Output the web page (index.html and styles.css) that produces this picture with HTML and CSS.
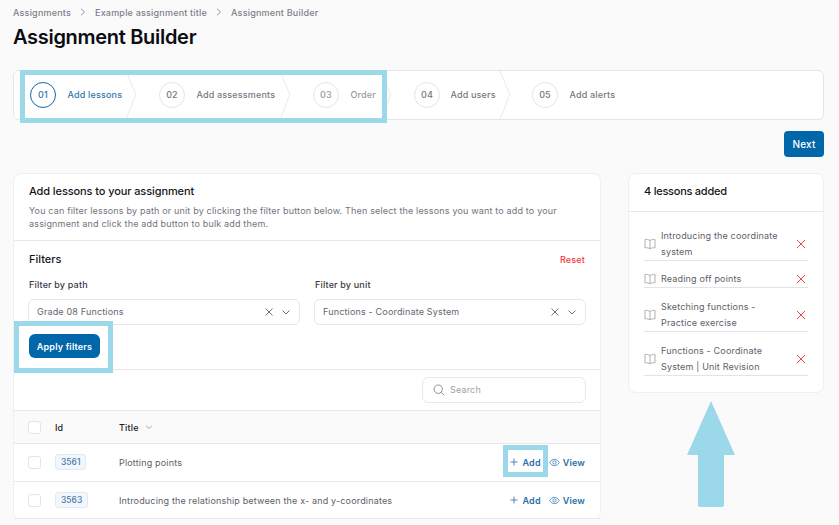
FILE: index.html
```html
<!DOCTYPE html>
<html lang="en">
<head>
<meta charset="utf-8">
<title>Assignment Builder</title>
<link rel="stylesheet" href="styles.css">
</head>
<body>
<div class="page">
  <nav class="crumbs">
    <span>Assignments</span>
    <svg class="crumb-sep" viewBox="0 0 8 8"><path d="M2 .8 5.6 4 2 7.2"/></svg>
    <span>Example assignment title</span>
    <svg class="crumb-sep" viewBox="0 0 8 8"><path d="M2 .8 5.6 4 2 7.2"/></svg>
    <span>Assignment Builder</span>
  </nav>
  <h1 class="title">Assignment Builder</h1>

  <div class="stepper">
    <div class="step step-active step-1"><span class="num">01</span><span class="step-label">Add lessons</span></div>
    <svg class="chev" viewBox="0 0 12 50"><path d="M1 0 11 24.500 1 50"/></svg>
    <div class="step step-2"><span class="num">02</span><span class="step-label">Add assessments</span></div>
    <svg class="chev" viewBox="0 0 12 50"><path d="M1 0 11 24.500 1 50"/></svg>
    <div class="step step-3 step-dim"><span class="num">03</span><span class="step-label">Order</span></div>
    <svg class="chev" viewBox="0 0 12 50"><path d="M1 0 11 24.500 1 50"/></svg>
    <div class="step step-4"><span class="num">04</span><span class="step-label">Add users</span></div>
    <svg class="chev" viewBox="0 0 12 50"><path d="M1 0 11 24.500 1 50"/></svg>
    <div class="step step-5"><span class="num">05</span><span class="step-label">Add alerts</span></div>
    <div class="hl hl-steps"></div>
  </div>

  <div class="next-row"><button class="btn btn-next">Next</button></div>

  <div class="columns">
    <section class="card main-card">
      <div class="intro">
        <h2 class="card-title title-intro">Add lessons to your assignment</h2>
        <p class="desc">You can filter lessons by path or unit by clicking the filter button below. Then select the lessons you want to add to your assignment and click the add button to bulk add them.</p>
      </div>
      <div class="filters">
        <div class="filters-head"><h3 class="card-title">Filters</h3><a class="reset">Reset</a></div>
        <div class="filter-grid">
          <div class="field">
            <label class="field-label">Filter by path</label>
            <div class="select"><span class="select-text">Grade 08 Functions</span>
              <svg class="ico-x" viewBox="0 0 10 10"><path d="M1.500 1.500 8.500 8.500M8.500 1.500 1.500 8.500"/></svg>
              <svg class="ico-down" viewBox="0 0 10 10"><path d="M1.500 3.500 5 7 8.500 3.500"/></svg>
            </div>
          </div>
          <div class="field">
            <label class="field-label">Filter by unit</label>
            <div class="select"><span class="select-text">Functions - Coordinate System</span>
              <svg class="ico-x" viewBox="0 0 10 10"><path d="M1.500 1.500 8.500 8.500M8.500 1.500 1.500 8.500"/></svg>
              <svg class="ico-down" viewBox="0 0 10 10"><path d="M1.500 3.500 5 7 8.500 3.500"/></svg>
            </div>
          </div>
        </div>
        <div class="apply-wrap">
          <button class="btn btn-apply">Apply filters</button>
          <div class="hl hl-apply"></div>
        </div>
      </div>
      <div class="search-row">
        <div class="search">
          <svg class="ico-search" viewBox="0 0 12 12"><circle cx="5.200" cy="5.200" r="4.200"/><path d="M8.300 8.300 11.200 11.200"/></svg>
          <span class="search-text">Search</span>
        </div>
      </div>
      <div class="row row-head">
        <span class="check"></span>
        <span class="col-id">Id</span>
        <span class="col-title">Title <svg class="ico-sort" viewBox="0 0 10 10"><path d="M1.500 3.500 5 7 8.500 3.500"/></svg></span>
      </div>
      <div class="row row-first">
        <span class="check"></span>
        <span class="col-id"><span class="badge">3561</span></span>
        <span class="col-title row-text">Plotting points</span>
        <div class="actions">
          <a class="action action-add"><svg class="ico-plus" viewBox="0 0 10 10"><path d="M5 .5V9.500M.5 5H9.500"/></svg>Add<span class="hl hl-add"></span></a>
          <a class="action"><svg class="ico-eye" viewBox="0 0 12 10"><path d="M.7 5C2 2.700 3.800 1.500 6 1.500S10 2.700 11.300 5C10 7.300 8.200 8.500 6 8.500S2 7.300.7 5Z"/><circle cx="6" cy="5" r="1.800"/></svg>View</a>
        </div>
      </div>
      <div class="row">
        <span class="check"></span>
        <span class="col-id"><span class="badge">3563</span></span>
        <span class="col-title row-text">Introducing the relationship between the x- and y-coordinates</span>
        <div class="actions">
          <a class="action action-add"><svg class="ico-plus" viewBox="0 0 10 10"><path d="M5 .5V9.500M.5 5H9.500"/></svg>Add</a>
          <a class="action"><svg class="ico-eye" viewBox="0 0 12 10"><path d="M.7 5C2 2.700 3.800 1.500 6 1.500S10 2.700 11.300 5C10 7.300 8.200 8.500 6 8.500S2 7.300.7 5Z"/><circle cx="6" cy="5" r="1.800"/></svg>View</a>
        </div>
      </div>
    </section>

    <aside class="side">
      <section class="card side-card">
        <div class="side-head"><h2 class="card-title title-side">4 lessons added</h2></div>
        <ul class="lessons">
          <li class="lesson">
            <svg class="ico-book" viewBox="0 0 12 12"><path d="M6 2.600C4.700 1.500 2.800 1.300 1 1.500V9.800C2.800 9.600 4.700 9.800 6 10.900 7.300 9.800 9.200 9.600 11 9.800V1.500C9.200 1.300 7.300 1.500 6 2.600ZM6 2.600V10.900"/></svg>
            <span class="lesson-text">Introducing the coordinate system</span>
            <svg class="ico-remove" viewBox="0 0 10 10"><path d="M1 1 9 9M9 1 1 9"/></svg>
          </li>
          <li class="lesson">
            <svg class="ico-book" viewBox="0 0 12 12"><path d="M6 2.600C4.700 1.500 2.800 1.300 1 1.500V9.800C2.800 9.600 4.700 9.800 6 10.900 7.300 9.800 9.200 9.600 11 9.800V1.500C9.200 1.300 7.300 1.500 6 2.600ZM6 2.600V10.900"/></svg>
            <span class="lesson-text">Reading off points</span>
            <svg class="ico-remove" viewBox="0 0 10 10"><path d="M1 1 9 9M9 1 1 9"/></svg>
          </li>
          <li class="lesson">
            <svg class="ico-book" viewBox="0 0 12 12"><path d="M6 2.600C4.700 1.500 2.800 1.300 1 1.500V9.800C2.800 9.600 4.700 9.800 6 10.900 7.300 9.800 9.200 9.600 11 9.800V1.500C9.200 1.300 7.300 1.500 6 2.600ZM6 2.600V10.900"/></svg>
            <span class="lesson-text">Sketching functions - Practice exercise</span>
            <svg class="ico-remove" viewBox="0 0 10 10"><path d="M1 1 9 9M9 1 1 9"/></svg>
          </li>
          <li class="lesson">
            <svg class="ico-book" viewBox="0 0 12 12"><path d="M6 2.600C4.700 1.500 2.800 1.300 1 1.500V9.800C2.800 9.600 4.700 9.800 6 10.900 7.300 9.800 9.200 9.600 11 9.800V1.500C9.200 1.300 7.300 1.500 6 2.600ZM6 2.600V10.900"/></svg>
            <span class="lesson-text">Functions - Coordinate System | Unit Revision</span>
            <svg class="ico-remove" viewBox="0 0 10 10"><path d="M1 1 9 9M9 1 1 9"/></svg>
          </li>
        </ul>
      </section>
      <svg class="arrow" viewBox="0 0 48 106"><path d="M24 0 48 54H37V104Q37 106 35 106H13Q11 106 11 104V54H0Z"/></svg>
    </aside>
  </div>
</div>
</body>
</html>
```
FILE: styles.css
```css
* { box-sizing: border-box; }
html, body { margin: 0; height: 525px; overflow: hidden; }
body { background: #fafafa; font-family: Inter, "Liberation Sans", sans-serif; color: #111827; letter-spacing: .17px; }
svg { display: block; flex: none; fill: none; }
.page { padding: 6px 15px 0 13px; }

.crumbs { display: flex; align-items: center; height: 12px; font-size: 9px; font-weight: 500; color: #80808a; gap: 7px; letter-spacing: .2px; }
.crumb-sep { width: 8px; height: 8px; margin: 0 1px; stroke: #8c8c94; stroke-width: .9; }
.title { margin: 6px 0 0; font-size: 20px; line-height: 26px; font-weight: 600; color: #0b0b12; letter-spacing: -.3px; }

.stepper { position: relative; display: flex; margin-top: 20px; height: 50px; background: #fff; border: 1px solid #e5e5e7; border-radius: 6px; }
.step { display: flex; align-items: center; gap: 11.500px; padding-bottom: 1px; font-size: 9px; font-weight: 500; color: #77777f; }
.step-1 { padding-left: 16px; width: 111px; }
.step-2 { padding-left: 22px; width: 142px; }
.step-3 { padding-left: 22px; width: 89px; }
.step-4 { padding-left: 22px; width: 107px; gap: 10.500px; }
.step-5 { padding-left: 21px; }
.num { display: flex; align-items: center; justify-content: center; width: 26px; height: 26px; border: 1px solid #e5e5e7; border-radius: 50%; }
.step-label { white-space: nowrap; }
.step-active { color: #2f77ac; }
.step-active .num { border-color: #1268a6; color: #2f77ac; }
.step-dim { color: #9a9aa1; }
.chev { width: 12px; height: 48px; stroke: #e8e8ea; stroke-width: 1; }

.hl { position: absolute; border: 5px solid #9bd9ea; pointer-events: none; }
.hl-steps { left: 6px; top: -1px; width: 367px; height: 53px; }
.hl-apply { left: -15px; top: -13px; width: 99px; height: 52px; }
.hl-add { left: -7px; top: -12px; width: 45px; height: 32px; }

.next-row { display: flex; justify-content: flex-end; margin-top: 11px; }
.btn { border: 0; background: #0266aa; color: #fff; font-family: inherit; font-weight: 600; letter-spacing: inherit; }
.btn-next { width: 40px; height: 26px; padding: 0 0 1px; border-radius: 4px; font-size: 10px; font-weight: 500; }

.columns { display: grid; grid-template-columns: 588px 196px; gap: 27px; margin-top: 16px; align-items: start; }
.card { background: #fff; border: 1px solid #efeff1; border-radius: 8px; }
.main-card { border-bottom: 0; }
.card-title { margin: 0; font-size: 11px; line-height: 14px; font-weight: 500; color: #15151c; letter-spacing: 0; }
.title-intro { letter-spacing: -.1px; }
.title-side { letter-spacing: -.25px; }

.intro { height: 67px; padding: 10px 15px 0; border-bottom: 1px solid #e8e8ea; }
.desc { margin: 6px 0 0; font-size: 9px; line-height: 13px; color: #73737c; }

.filters { height: 129px; padding: 11px 15px 0; border-bottom: 1px solid #e8e8ea; }
.filters-head { display: flex; justify-content: space-between; align-items: center; }
.reset { font-size: 9px; font-weight: 500; color: #ef3b3f; }
.filter-grid { display: grid; grid-template-columns: 272px 272px; gap: 14px; margin: 13px 0 0 -1px; }
.field-label { display: block; padding-left: 1px; font-size: 9px; line-height: 12px; font-weight: 500; color: #3a3a44; }
.select { display: flex; align-items: center; height: 26px; margin-top: 8px; padding: 0 8px; background: #fff; border: 1px solid #e8e8ea; border-radius: 6px; font-size: 9px; color: #66666f; }
.select-text { flex: 1; padding-bottom: 1px; }
.ico-x { width: 10px; height: 10px; stroke: #6e6e77; stroke-width: 1; margin-right: 7px; }
.ico-down { width: 10px; height: 10px; stroke: #6e6e77; stroke-width: 1; }
.apply-wrap { position: relative; width: 71px; margin-top: 9px; }
.btn-apply { display: block; width: 71px; height: 24px; border-radius: 6px; font-size: 9px; }

.search-row { display: flex; justify-content: flex-end; height: 40px; padding: 7px 14px 0 0; }
.search { display: flex; align-items: center; gap: 5px; width: 164px; height: 26px; padding-left: 10px; background: #fff; border: 1px solid #e8e8ea; border-radius: 6px; font-size: 9px; color: #a0a0a7; }
.search-text { padding-bottom: 1px; }
.ico-search { width: 12px; height: 12px; stroke: #8e8e96; stroke-width: 1; }

.row { display: flex; align-items: center; height: 38px; padding: 0 15px 0 14px; border-top: 1px solid #e8e8ea; font-size: 9px; color: #5e5e68; }
.row:last-child { border-bottom: 1px solid #e8e8ea; height: 38px; }
.row-head { height: 33px; background: #fafafa; color: #1d1d26; font-weight: 500; }
.row-first { padding-bottom: 1px; }
.check { width: 13px; height: 13px; background: #fff; border: 1px solid #e5e5e7; border-radius: 3px; }
.col-id { width: 78px; padding-left: 14px; }
.col-title { display: flex; align-items: center; gap: 6px; }
.row-text { flex: 1; }
.ico-sort { width: 8px; height: 8px; stroke: #8e8e96; stroke-width: 1; }
.badge { display: inline-block; padding: 0 5px; height: 16px; line-height: 14px; background: #f1f7fc; border: 1px solid #dfeaf3; border-radius: 3px; font-size: 8.500px; font-weight: 500; color: #4b78a5; vertical-align: middle; letter-spacing: 0; }
.actions { display: flex; align-items: center; gap: 8px; }
.action { position: relative; display: flex; align-items: center; gap: 3px; font-size: 9px; font-weight: 600; color: #2a6fa8; }
.action-add { gap: 5px; }
.ico-plus { width: 8px; height: 8px; stroke: #2a6fa8; stroke-width: 1; }
.ico-eye { width: 11px; height: 9px; stroke: #3f7fae; stroke-width: .9; }

.side { display: flex; flex-direction: column; }
.side-card { width: 100%; }
.side-head { height: 38px; padding: 10px 15px 0; border-bottom: 1px solid #e8e8ea; }
.lessons { list-style: none; margin: 0; padding: 16px 15px 16px; display: flex; flex-direction: column; gap: 10px; }
.lesson { display: flex; align-items: center; border-bottom: 1px solid #e4e4e6; font-size: 9px; line-height: 16px; color: #5e5e68; }
.lesson + .lesson + .lesson { margin-top: 1px; }
.lesson-text { flex: 1; margin-left: 5px; padding-right: 16px; }
.ico-book { width: 12px; height: 12px; stroke: #a8a8ae; stroke-width: .9; }
.ico-remove { width: 10px; height: 10px; stroke: #f0474c; stroke-width: 1; margin-right: 2px; }
.arrow { width: 48px; height: 106px; margin: 8px 0 0 59px; fill: #9bd9ea; }
```
